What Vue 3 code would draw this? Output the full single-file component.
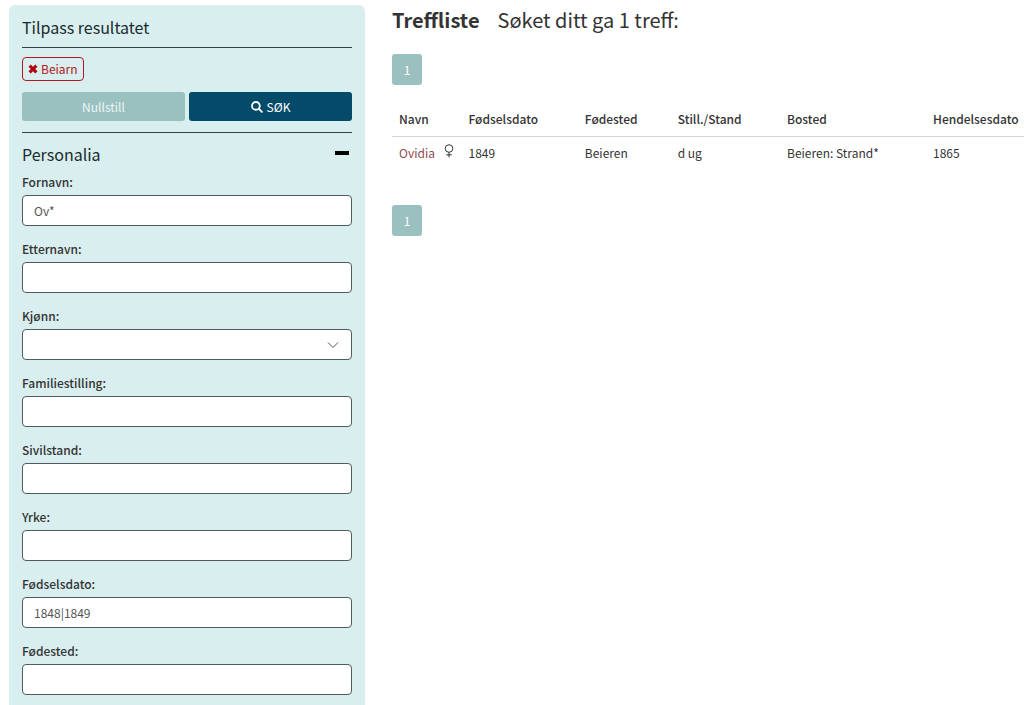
<script setup>
import { reactive } from 'vue'

const fields = reactive([
  { id: 'fornavn', label: 'Fornavn:', value: 'Ov*' },
  { id: 'etternavn', label: 'Etternavn:', value: '' },
  { id: 'kjonn', label: 'Kjønn:', value: '', select: true },
  { id: 'familiestilling', label: 'Familiestilling:', value: '' },
  { id: 'sivilstand', label: 'Sivilstand:', value: '' },
  { id: 'yrke', label: 'Yrke:', value: '' },
  { id: 'fodselsdato', label: 'Fødselsdato:', value: '1848|1849' },
  { id: 'fodested', label: 'Fødested:', value: '' },
])
</script>

<template>
  <div class="page">
    <aside class="panel">
      <h2 class="panel-title">Tilpass resultatet</h2>
      <div class="filters">
        <button type="button" class="tag">
          <svg class="cross" viewBox="0 0 10 10" aria-hidden="true">
            <path d="M1.6 1.6 8.4 8.4M8.4 1.6 1.6 8.4" />
          </svg>
          <span>Beiarn</span>
        </button>
      </div>
      <div class="actions">
        <button type="button" class="btn reset">Nullstill</button>
        <button type="submit" class="btn search">
          <svg class="glass" viewBox="0 0 13 13" aria-hidden="true">
            <circle cx="5.3" cy="5.3" r="4.2" />
            <path d="M8.6 8.6 11.8 11.8" />
          </svg>
          <span>SØK</span>
        </button>
      </div>
      <section class="group">
        <button type="button" class="group-head" aria-expanded="true">
          <span>Personalia</span>
          <span class="minus"></span>
        </button>
        <div v-for="f in fields" :key="f.id" class="field">
          <label :for="f.id">{{ f.label }}</label>
          <div v-if="f.select" class="select-wrap">
            <select :id="f.id" v-model="f.value" class="control">
              <option value=""></option>
            </select>
            <svg class="chevron" viewBox="0 0 12 8" aria-hidden="true">
              <path d="M1 1.5 6 6.5 11 1.5" />
            </svg>
          </div>
          <input v-else :id="f.id" v-model="f.value" type="text" class="control" />
        </div>
      </section>
    </aside>

    <main class="results">
      <h1 class="heading"><strong>Treffliste</strong><span>Søket ditt ga 1 treff:</span></h1>
      <nav aria-label="Sider"><a href="#" class="pager">1</a></nav>
      <table>
        <colgroup>
          <col class="c-name" /><col class="c-born" /><col class="c-place" />
          <col class="c-status" /><col class="c-home" /><col />
        </colgroup>
        <thead>
          <tr>
            <th>Navn</th>
            <th>Fødselsdato</th>
            <th>Fødested</th>
            <th>Still./Stand</th>
            <th>Bosted</th>
            <th>Hendelsesdato</th>
          </tr>
        </thead>
        <tbody>
          <tr>
            <td>
              <div class="person">
                <a href="#">Ovidia</a>
                <svg class="female" viewBox="0 0 10 14" role="img" aria-label="Kvinne">
                  <circle cx="5" cy="4.5" r="3.8" />
                  <path d="M5 8.3V13.4M2.2 10.8H7.8" />
                </svg>
              </div>
            </td>
            <td>1849</td>
            <td>Beieren</td>
            <td>d ug</td>
            <td>Beieren: Strand*</td>
            <td>1865</td>
          </tr>
        </tbody>
      </table>
      <nav aria-label="Sider nederst"><a href="#" class="pager">1</a></nav>
    </main>
  </div>
</template>

<style>
body {
  background: #fff;
  overflow: hidden;
}
</style>

<style scoped>
.page {
  display: grid;
  grid-template-columns: 356px minmax(0, 1fr);
  column-gap: 27px;
  padding: 5px 0 0 9px;
  font-family: "Noto Sans CJK SC", "Noto Sans", sans-serif;
  font-size: 12px;
  line-height: 18px;
  color: #333;
}
button, input, select {
  font: inherit;
  box-sizing: border-box;
}
.panel {
  background: #d9eeef;
  border-radius: 6px;
  padding: 7px 13px 24px;
}
.panel-title {
  margin: 0;
  padding-bottom: 5px;
  border-bottom: 1px solid #2f4447;
  font-size: 16px;
  font-weight: 400;
  line-height: 30px;
  color: #1b2b2d;
}
.filters {
  display: flex;
  padding: 9px 0 11px;
}
.tag {
  display: flex;
  align-items: center;
  gap: 3px;
  height: 24px;
  padding: 0 5px;
  border: 1px solid #b01822;
  border-radius: 4px;
  background: transparent;
  color: #b01822;
}
.cross {
  width: 10px;
  height: 10px;
  fill: none;
  stroke: #b3000c;
  stroke-width: 3;
}
.actions {
  display: grid;
  grid-template-columns: 1fr 1fr;
  gap: 4px;
}
.btn {
  display: flex;
  align-items: center;
  justify-content: center;
  gap: 4px;
  height: 29px;
  border: 0;
  border-radius: 3px;
  color: #fff;
}
.reset {
  background: #9ac0bf;
  color: #edf7f7;
}
.search {
  background: #044b69;
}
.glass {
  width: 12px;
  height: 12px;
  fill: none;
  stroke: #fff;
  stroke-width: 2;
  stroke-linecap: round;
}
.group {
  margin-top: 11px;
  border-top: 1px solid #2f4447;
  padding-top: 6px;
}
.group-head {
  display: flex;
  justify-content: space-between;
  width: 100%;
  margin-bottom: 4px;
  padding: 0 3px 0 0;
  border: 0;
  background: transparent;
  font-size: 16px;
  line-height: 30px;
  color: #1b2b2d;
}
.minus {
  width: 14px;
  height: 4px;
  margin-top: 12px;
  background: #000;
}
.field {
  display: flex;
  flex-direction: column;
  gap: 4px;
  margin-bottom: 14px;
}
.field label {
  font-weight: 500;
}
.control {
  display: block;
  width: 100%;
  height: 31px;
  padding: 0 11px;
  border: 1px solid #4f5b5d;
  border-radius: 4px;
  background: #fff;
  color: #555;
  appearance: none;
}
.select-wrap {
  position: relative;
}
.chevron {
  position: absolute;
  top: 12px;
  right: 13px;
  width: 12px;
  height: 8px;
  fill: none;
  stroke: #555;
  pointer-events: none;
}
.heading {
  margin: 0 0 19px;
  font-size: 20px;
  font-weight: 400;
  line-height: 30px;
}
.heading span {
  margin-left: 18px;
}
.pager {
  display: flex;
  align-items: center;
  justify-content: center;
  width: 30px;
  height: 31px;
  border-radius: 3px;
  background: #9ac0bf;
  color: #fff;
  text-decoration: none;
}
table {
  width: 100%;
  margin: 17px 0 35px;
  table-layout: fixed;
  border-collapse: collapse;
}
th, td {
  padding: 8px 0 8px 7px;
  text-align: left;
  white-space: nowrap;
}
td {
  padding-top: 7px;
}
th {
  font-weight: 500;
  border-bottom: 1px solid #d5d5d5;
}
.c-name { width: 11%; }
.c-born { width: 18.4%; }
.c-place { width: 14.7%; }
.c-status { width: 17.3%; }
.c-home { width: 23.1%; }
.person {
  display: flex;
  justify-content: space-between;
  padding-right: 8px;
}
.person a {
  color: #8f4a4f;
  text-decoration: none;
}
.female {
  width: 10px;
  height: 14px;
  fill: none;
  stroke: #333;
}
</style>
